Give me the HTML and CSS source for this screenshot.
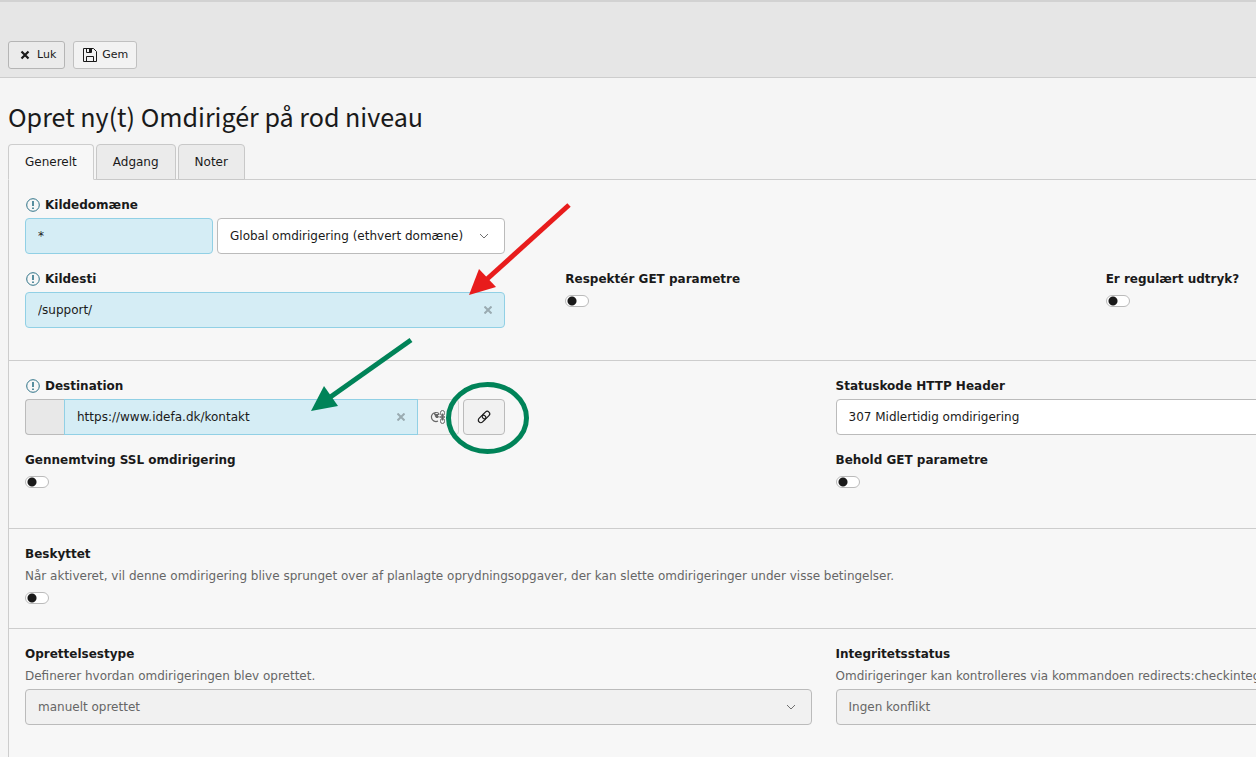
FILE: index.html
```html
<!DOCTYPE html>
<html lang="da">
<head>
  <meta charset="UTF-8">
  <meta name="viewport" content="width=device-width, initial-scale=1.0">
  <title>Opret ny(t) Omdirigér på rod niveau</title>
  <link rel="stylesheet" href="styles.css">
</head>
<body>
  <header class="docheader">
    <button type="button" class="btn">
      <svg class="icon" viewBox="0 0 16 16"><path d="M4.500 4.500l7 7M11.500 4.500l-7 7" stroke="currentColor" stroke-width="2.200" fill="none"/></svg>
      Luk
    </button>
    <button type="button" class="btn btn-save">
      <svg class="icon" viewBox="0 0 16 16"><path d="M1.500 1.500h10l3 3v10h-13zM4.500 14.500v-5h7v5M4.500 1.500v4h5v-4" stroke="currentColor" fill="none"/><path d="M7 2h2v3H7z" fill="currentColor"/></svg>
      Gem
    </button>
  </header>

  <main class="module">
    <h1>Opret ny(t) Omdirigér på rod niveau</h1>
    <div class="tabs" role="tablist">
      <button type="button" class="tab active" role="tab" aria-selected="true">Generelt</button>
      <button type="button" class="tab" role="tab">Adgang</button>
      <button type="button" class="tab" role="tab">Noter</button>
    </div>

    <form class="panel">
      <section class="section">
        <div class="row">
          <div class="field">
            <label for="host"><svg class="icon-required" viewBox="0 0 14 14"><circle cx="7" cy="7" r="6.300"/><path d="M7 3v5M7 9.500v1.500" stroke-width="1.600"/></svg>Kildedomæne</label>
            <div class="group">
              <input type="text" id="host" class="control changed host" value="*">
              <div class="select-wrap">
                <select class="control" aria-label="Kildedomæne">
                  <option>Global omdirigering (ethvert domæne)</option>
                </select>
                <svg class="chevron" viewBox="0 0 10 6"><path d="M1 1l4 4 4-4"/></svg>
              </div>
            </div>
          </div>
        </div>
        <div class="row cols-3">
          <div class="field">
            <label for="path"><svg class="icon-required" viewBox="0 0 14 14"><circle cx="7" cy="7" r="6.300"/><path d="M7 3v5M7 9.500v1.500" stroke-width="1.600"/></svg>Kildesti</label>
            <div class="group clearable">
              <input type="text" id="path" class="control changed" value="/support/">
              <button type="button" class="clear" aria-label="Ryd"><svg viewBox="0 0 8 8"><path d="M.5.5l7 7M7.500.5l-7 7"/></svg></button>
            </div>
          </div>
          <div class="field">
            <label for="respect">Respektér GET parametre</label>
            <div class="check"><input type="checkbox" id="respect" class="toggle"></div>
          </div>
          <div class="field">
            <label for="regexp">Er regulært udtryk?</label>
            <div class="check"><input type="checkbox" id="regexp" class="toggle"></div>
          </div>
        </div>
      </section>

      <section class="section">
        <div class="row cols-2">
          <div class="field">
            <label for="target"><svg class="icon-required" viewBox="0 0 14 14"><circle cx="7" cy="7" r="6.300"/><path d="M7 3v5M7 9.500v1.500" stroke-width="1.600"/></svg>Destination</label>
            <div class="group">
              <div class="linkfield">
                <span class="addon"></span>
                <div class="clearable">
                  <input type="text" id="target" class="control changed" value="https://www.idefa.dk/kontakt">
                  <button type="button" class="clear" aria-label="Ryd"><svg viewBox="0 0 8 8"><path d="M.5.5l7 7M7.500.5l-7 7"/></svg></button>
                </div>
                <button type="button" class="explain" disabled aria-label="Skift visning">
                  <svg viewBox="0 0 16 16"><path d="M6 3.500a4.500 4.500 0 1 0 2 8.500M4 5c2-2 4-2 5 0l-3 2 3 1" stroke-width="1.200"/><path d="M4 5h4v4H6z" fill="currentColor" stroke="none"/><rect x="10.500" y="1.500" width="4" height="5" rx="2"/><rect x="10.500" y="9.500" width="4" height="5" rx="2"/><path d="M12.500 4.500v7M9.500 8h5.500" stroke-width="1.400"/></svg>
                </button>
              </div>
              <button type="button" class="btn-link" aria-label="Link">
                <svg viewBox="0 0 16 16"><g transform="rotate(-45 8 8)" stroke-width="1.200"><rect x="1" y="5.500" width="8.500" height="5" rx="2.500"/><rect x="6.500" y="5.500" width="8.500" height="5" rx="2.500"/></g></svg>
              </button>
            </div>
          </div>
          <div class="field">
            <label for="status">Statuskode HTTP Header</label>
            <div class="select-wrap">
              <select id="status" class="control">
                <option>307 Midlertidig omdirigering</option>
              </select>
              <svg class="chevron" viewBox="0 0 10 6"><path d="M1 1l4 4 4-4"/></svg>
            </div>
          </div>
        </div>
        <div class="row cols-2">
          <div class="field">
            <label for="ssl">Gennemtving SSL omdirigering</label>
            <div class="check"><input type="checkbox" id="ssl" class="toggle"></div>
          </div>
          <div class="field">
            <label for="keep">Behold GET parametre</label>
            <div class="check"><input type="checkbox" id="keep" class="toggle"></div>
          </div>
        </div>
      </section>

      <section class="section">
        <div class="field">
          <label for="protected">Beskyttet</label>
          <p class="description">Når aktiveret, vil denne omdirigering blive sprunget over af planlagte oprydningsopgaver, der kan slette omdirigeringer under visse betingelser.</p>
          <div class="check"><input type="checkbox" id="protected" class="toggle"></div>
        </div>
      </section>

      <section class="section">
        <div class="row cols-2">
          <div class="field">
            <label for="creation">Oprettelsestype</label>
            <p class="description">Definerer hvordan omdirigeringen blev oprettet.</p>
            <div class="select-wrap">
              <select id="creation" class="control" disabled>
                <option>manuelt oprettet</option>
              </select>
              <svg class="chevron" viewBox="0 0 10 6"><path d="M1 1l4 4 4-4"/></svg>
            </div>
          </div>
          <div class="field">
            <label for="integrity">Integritetsstatus</label>
            <p class="description">Omdirigeringer kan kontrolleres via kommandoen redirects:checkintegrity.</p>
            <div class="select-wrap">
              <select id="integrity" class="control" disabled>
                <option>Ingen konflikt</option>
              </select>
              <svg class="chevron" viewBox="0 0 10 6"><path d="M1 1l4 4 4-4"/></svg>
            </div>
          </div>
        </div>
      </section>
    </form>
  </main>

  <!-- arrows and ring on top of the form -->
  <svg class="annotations" width="560" height="480" viewBox="0 0 560 480">
    <path d="M569 205L486 280" stroke="#e81c1c" stroke-width="5"/>
    <path d="M469 295l10-26 17 18z" fill="#e81c1c"/>
    <path d="M411 340L329 398" stroke="#008358" stroke-width="5"/>
    <path d="M311 411l13-25 14 20z" fill="#008358"/>
    <ellipse cx="487.500" cy="418" rx="39" ry="33.500" fill="none" stroke="#008358" stroke-width="5"/>
  </svg>
</body>
</html>
```
FILE: styles.css
```css
* {
  box-sizing: border-box;
}
body {
  position: relative;
  margin: 0;
  min-height: 100vh;
  overflow: hidden;
  background-color: #f5f5f5;
  color: #1a1a1a;
  font-family: Verdana, "DejaVu Sans", sans-serif;
  font-size: 12px;
  line-height: 18px;
}
button, input, select {
  font: inherit;
  color: inherit;
}
svg {
  display: block;
}
.docheader {
  display: flex;
  gap: 8px;
  padding: 39px 8px 8px;
  border-top: 2px solid #d2d2d2;
  border-bottom: 1px solid #cdcdcd;
  background-color: #e6e6e6;
}
.btn {
  display: flex;
  align-items: center;
  gap: 4px;
  height: 28px;
  padding: 0 8px;
  border: 1px solid #b5b5b5;
  border-radius: 3px;
  background-color: #ebebeb;
  font-size: 11px;
}
.btn-save {
  border-color: #c0c0c0;
  background-color: #f2f2f2;
}
.icon {
  width: 16px;
  height: 16px;
}
.module {
  padding: 24px 8px 0;
}
h1 {
  margin: 0 0 10px;
  font-family: "Source Sans 3", "Noto Sans CJK JP", sans-serif;
  font-size: 28px;
  font-weight: 400;
  line-height: 32px;
}
.tabs {
  position: relative;
  z-index: 1;
  display: flex;
  gap: 2px;
}
.tab {
  height: 36px;
  padding: 0 16px;
  border: 1px solid #c8c8c8;
  border-radius: 4px 4px 0 0;
  background-color: #ebebeb;
}
.tab.active {
  border-color: #cdcdcd;
  border-bottom-color: #f7f7f7;
  background-color: #f7f7f7;
}
/* wider than small screens, the module is cut off at the right */
.panel {
  min-width: 1631px;
  margin-top: -1px;
  border: 1px solid #cdcdcd;
  background-color: #f7f7f7;
}
.section {
  padding: 16px;
  border-bottom: 1px solid #cdcdcd;
}
.row {
  display: grid;
  gap: 24px;
  margin-bottom: 16px;
}
.cols-2 {
  grid-template-columns: repeat(2, 1fr);
}
.cols-3 {
  grid-template-columns: repeat(3, 1fr);
}
.field label {
  display: flex;
  align-items: center;
  gap: 4px;
  margin-bottom: 4px;
  font-weight: 700;
}
.icon-required {
  width: 16px;
  height: 14px;
  fill: none;
  stroke: #2f7388;
}
.description {
  margin: 0 0 4px;
  color: #666666;
}
.group {
  display: flex;
  gap: 4px;
  max-width: 480px;
}
.control {
  display: block;
  width: 100%;
  height: 36px;
  padding: 0 12px;
  border: 1px solid #bbbbbb;
  border-radius: 4px;
  background-color: #ffffff;
  appearance: none;
}
.control.changed {
  border-color: #91d0e5;
  background-color: #d5edf5;
}
.control:disabled {
  background-color: #f1f1f1;
  color: #666666;
  opacity: 1;
}
.group .host {
  flex: 1;
  min-width: 0;
}
.select-wrap {
  position: relative;
}
.group .select-wrap {
  flex: none;
  width: 288px;
}
.chevron {
  position: absolute;
  top: 15px;
  right: 16px;
  width: 10px;
  height: 6px;
  fill: none;
  stroke: #707070;
}
.clearable {
  position: relative;
  flex: 1;
}
.clear {
  position: absolute;
  top: 10px;
  right: 9px;
  padding: 4px;
  border: 0;
  background: none;
}
.clear svg {
  width: 8px;
  height: 8px;
  fill: none;
  stroke: #9aabb1;
  stroke-width: 2;
}
.linkfield {
  display: flex;
  flex: 1;
}
.addon {
  width: 39px;
  border: 1px solid #bbbbbb;
  border-right: 0;
  border-radius: 4px 0 0 4px;
  background-color: #e8e8e8;
}
.linkfield .control {
  border-radius: 0;
}
.explain {
  width: 41px;
  padding: 0 12px;
  border: 1px solid #d2d2d2;
  border-left: 0;
  border-radius: 0 4px 4px 0;
  background-color: #f4f4f4;
  color: #666666;
}
.explain svg,
.btn-link svg {
  width: 16px;
  height: 16px;
  fill: none;
  stroke: currentColor;
}
.btn-link {
  width: 42px;
  padding: 0 12px;
  border: 1px solid #bbbbbb;
  border-radius: 4px;
  background-color: #f1f1f1;
}
.check {
  height: 23px;
  padding-top: 3px;
}
.toggle {
  display: block;
  width: 24px;
  height: 12px;
  margin: 0;
  border: 1px solid #bbbbbb;
  border-radius: 6px;
  background: radial-gradient(circle at 6px 5px, #1a1a1a 4px, transparent 5px) #ffffff;
  appearance: none;
}
.annotations {
  position: absolute;
  top: 0;
  left: 0;
  overflow: visible;
  pointer-events: none;
}
```
